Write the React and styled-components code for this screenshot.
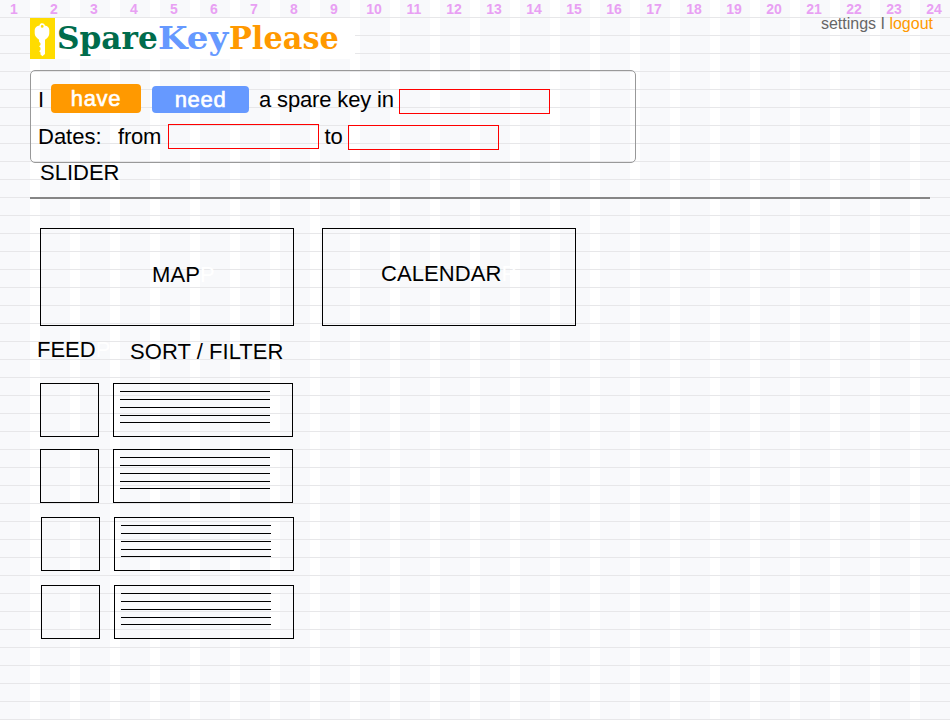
import React from "react";
import styled, { createGlobalStyle } from "styled-components";

const GlobalStyle = createGlobalStyle`
  * { box-sizing: border-box; }
  html, body { margin: 0; padding: 0; overflow: hidden; }
`;

const Page = styled.div`
  width: 950px;
  height: 720px;
  overflow: hidden;
  color: #000;
  font: 22px/24px "Liberation Sans", Arial, Helvetica, sans-serif;
  white-space: nowrap;
  background:
    repeating-linear-gradient(to bottom, transparent 0 17px, #e7e7e9 17px 18px),
    repeating-linear-gradient(to right, #f8f9fb 0 30px, #fff 30px 40px);
`;

const ColumnNumbers = styled.div`
  display: grid;
  grid-template-columns: repeat(24, 40px);
  height: 18px;
  margin-left: -6px;
  color: #e8a0f3;
  font-size: 14px;
  font-weight: bold;
  line-height: 18px;
  text-align: center;
`;

const Header = styled.header`
  display: flex;
  justify-content: space-between;
  height: 52px;
  padding: 0 17px 0 30px;
`;

const Logo = styled.div`
  display: flex;
  width: 325px;
  height: 41px;
  background: #fff;
`;

const KeyTile = styled.svg`
  flex: none;
  width: 25px;
  height: 41px;
  margin-right: 2px;
  background: #ffdc00;
`;

const LogoWord = styled.span`
  width: ${(p) => p.$width}px;
  color: ${(p) => p.$color};
  font: bold 31.5px/40px "DejaVu Serif", serif;
  transform: scaleX(${(p) => p.$scale});
  transform-origin: left;
`;

const UserLinks = styled.nav`
  color: #666;
  font-size: 16px;
  line-height: 18px;
  margin-top: -3px;
  height: 18px;
`;

const Logout = styled.span`
  color: #ff9900;
`;

const SearchPanel = styled.section`
  width: 606px;
  height: 93px;
  margin-left: 30px;
  border: 1px solid #999;
  border-radius: 5px;
`;

const SearchRow = styled.div`
  display: flex;
  align-items: flex-start;
  height: ${(p) => p.$height}px;
  padding-left: 7px;
`;

const Label = styled.span`
  width: ${(p) => p.$width}px;
  margin-top: ${(p) => p.$top}px;
  letter-spacing: ${(p) => p.$spacing || 0}px;
`;

const Choice = styled.button`
  width: ${(p) => p.$width}px;
  height: ${(p) => p.$height}px;
  margin: ${(p) => p.$margin};
  padding: 1px 0 0;
  border: 0;
  border-radius: 4px;
  color: #fff;
  background: ${(p) => p.$color};
  font: 22px/24px "Liberation Sans", Arial, sans-serif;
  letter-spacing: 0.7px;
  -webkit-text-stroke: 0.6px #fff;
`;

const Field = styled.input`
  width: 151px;
  height: 25px;
  margin: ${(p) => p.$top}px 0 0;
  padding: 0 4px;
  border: 1px solid #f00;
  border-radius: 0;
  background: transparent;
  outline: 0;
`;

const SliderTitle = styled.div`
  height: 34px;
  padding-left: 40px;
  margin-top: -2px;
`;

const Divider = styled.hr`
  width: 900px;
  height: 2px;
  margin: 2px 0 29px 30px;
  border: 0;
  background: #868686;
`;

const Panels = styled.div`
  display: flex;
  gap: 28px;
  padding-left: 40px;
`;

const Panel = styled.section`
  width: 254px;
  height: 98px;
  padding: ${(p) => p.$padding};
  border: 1px solid #000;
  letter-spacing: 0.1px;
`;

const Ghost = styled.span`
  color: #fff;
`;

const FeedHeader = styled.div`
  display: flex;
  height: 57px;
  padding: 12px 0 0 37px;
`;

const FeedRow = styled.article`
  display: flex;
  gap: 14px;
  height: 54px;
  margin: 0 0 ${(p) => p.$gap}px ${(p) => p.$left}px;
`;

const Thumb = styled.div`
  width: 59px;
  border: 1px solid #000;
`;

const Summary = styled.div`
  width: 180px;
  padding: 7px 0 0 6px;
  border: 1px solid #000;
`;

const TextLine = styled.div`
  width: 150px;
  height: 1px;
  margin-bottom: 7px;
  background: #000;
  &:last-child { margin-top: -1px; }
`;

const rows = [
  { left: 40, gap: 12 },
  { left: 40, gap: 14 },
  { left: 41, gap: 14 },
  { left: 41, gap: 0 },
];

export default function App() {
  return (
    <Page>
      <GlobalStyle />
      <ColumnNumbers>
        {Array.from({ length: 24 }, (_, i) => <span key={i}>{i + 1}</span>)}
      </ColumnNumbers>
      <Header>
        <Logo>
          <KeyTile viewBox="0 0 25 41">
            <path
              fill="#fff"
              fillRule="evenodd"
              d="M9.5 7.5C9.7 5.9 10.8 5.3 12.2 5.3S14.6 6 14.9 7.6C17.5 8 19.3 9.6 19.3 12V15.2C19.3 18.2 17.5 19.8 15 21.8V36L12.4 38.3 10.5 36.4V34.6L9.2 33.2 10.5 31.8V29.8L9.1 28.3 10.5 27V25.3L9.1 23.8V21.7C6.5 19.8 4.7 18.1 4.7 15.2V12C4.7 9.7 6.8 8 9.5 7.5ZM12.2 7A1.4 1.4 0 1 0 12.2 9.8A1.4 1.4 0 1 0 12.2 7Z"
            />
          </KeyTile>
          <LogoWord $width={101} $scale={0.99} $color="#006c4c">Spare</LogoWord>
          <LogoWord $width={71} $scale={1.08} $color="#6699ff">Key</LogoWord>
          <LogoWord $width={110} $scale={0.965} $color="#ff9900">Please</LogoWord>
        </Logo>
        <UserLinks>settings I <Logout>logout</Logout></UserLinks>
      </Header>
      <SearchPanel>
        <SearchRow $height={53}>
          <Label $width={13} $top={17}>I</Label>
          <Choice $width={90} $height={29} $margin="13px 11px 0 0" $color="#ff9900">have</Choice>
          <Choice $width={97} $height={27} $margin="15px 10px 0 0" $color="#6699ff">need</Choice>
          <Label $width={140} $top={17} $spacing={-0.15}>a spare key in</Label>
          <Field $top={18} aria-label="City" />
        </SearchRow>
        <SearchRow $height={38}>
          <Label $width={80} $top={1}>Dates:</Label>
          <Label $width={50} $top={1} $spacing={-0.2}>from</Label>
          <Field $top={0} aria-label="From date" />
          <Label $width={29} $top={1}>&#8202;&#8202;&#8202;to</Label>
          <Field $top={1} aria-label="To date" />
        </SearchRow>
      </SearchPanel>
      <SliderTitle>SLIDER</SliderTitle>
      <Divider />
      <Panels>
        <Panel $padding="34px 0 0 111px">MAP<Ghost>P</Ghost></Panel>
        <Panel $padding="33px 0 0 58px">CALENDAR<Ghost>P</Ghost></Panel>
      </Panels>
      <FeedHeader>
        <Label $width={93} $top={0}>FEED<Ghost>P</Ghost></Label>
        <Label $width={160} $top={2} $spacing={0.05}>SORT / FILTER</Label>
      </FeedHeader>
      {rows.map((row, i) => (
        <FeedRow key={i} $left={row.left} $gap={row.gap}>
          <Thumb />
          <Summary>
            {[0, 1, 2, 3, 4].map((n) => <TextLine key={n} />)}
          </Summary>
        </FeedRow>
      ))}
    </Page>
  );
}
